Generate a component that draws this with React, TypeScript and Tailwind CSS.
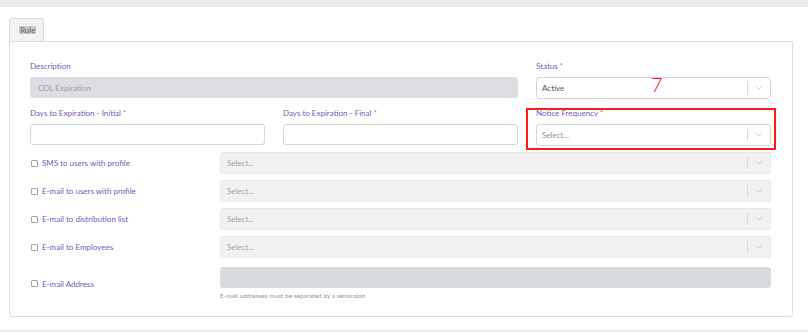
import { FiChevronDown } from "react-icons/fi";

const font = { fontFamily: "Lato, 'Open Sans', sans-serif" };

const notifyRows = [
  "SMS to users with profile",
  "E-mail to users with profile",
  "E-mail to distribution list",
  "E-mail to Employees",
];

function Label({ text, required }: { text: string; required?: boolean }) {
  return (
    <div className="h-[10px] leading-[10px] text-[8px] text-[#7a56bd] mb-[6px] whitespace-nowrap">
      {text}
      {required ? <span className="text-[#ee6677]"> *</span> : null}
    </div>
  );
}

function SelectBox({ value, disabled }: { value: string; disabled?: boolean }) {
  return (
    <div
      className={
        disabled
          ? "h-[22px] flex items-center rounded-[3px] border border-[#e8e8e8] bg-[#f1f1f1]"
          : "h-[22px] flex items-center rounded-[3px] border border-[#d6d6d6] bg-white"
      }
    >
      <span
        className={
          disabled
            ? "flex-1 pl-[6px] text-[8px] text-[#a3a3a3]"
            : "flex-1 pl-[5px] text-[8px] " + (value === "Active" ? "text-[#555]" : "text-[#909090]")
        }
      >
        {value}
      </span>
      <span className="w-px h-[12px] bg-[#d8d8d8]" />
      <span className="w-[22px] flex justify-center text-[#c4c4c4]">
        <FiChevronDown size={10} />
      </span>
    </div>
  );
}

export default function App() {
  return (
    <div className="relative w-[808px] h-[332px] bg-white overflow-hidden" style={font}>
      <div className="h-[7px] bg-[#e9eaed]" />
      <div className="pt-[11px] pl-[9px]">
        <div className="w-[35px] h-[23px] border border-b-0 border-[#d9d9d9] rounded-t-[3px] bg-[#f2f3f5] flex items-center pl-[9px]">
          <span className="text-[8px] leading-[8px] text-[#666] bg-[#c9c9c9] px-[1px]">Rule</span>
        </div>
        <div className="w-[784px] h-[276px] border border-[#dedede] rounded-b-[3px] pt-[19px] pl-[20px] pr-[21px]">
          <div className="grid grid-cols-[235px_235px_235px] gap-x-[18px] gap-y-[9px]">
            <div className="col-span-2">
              <Label text="Description" />
              <div className="h-[21px] rounded-[3px] bg-[#dcdee1] flex items-center pl-[8px] text-[8px] text-[#a0a0a0]">
                CDL Expiration
              </div>
            </div>
            <div>
              <Label text="Status" required />
              <SelectBox value="Active" />
            </div>
            <div>
              <Label text="Days to Expiration - Initial" required />
              <div className="h-[21px] rounded-[3px] border border-[#d6d6d6] bg-white" />
            </div>
            <div>
              <Label text="Days to Expiration - Final" required />
              <div className="h-[21px] rounded-[3px] border border-[#d6d6d6] bg-white" />
            </div>
            <div>
              <Label text="Notice Frequency" required />
              <SelectBox value="Select..." />
            </div>
          </div>

          <div className="mt-[6px] flex flex-col gap-[6px]">
            {notifyRows.map((row, index) => (
              <div key={index} className="flex items-center">
                <div className="w-[190px] flex items-center pl-[1px]">
                  <span className="w-[7px] h-[7px] border border-[#a5a5a5] rounded-[1px] bg-white" />
                  <span className="ml-[4px] text-[8px] text-[#7a56bd]">{row}</span>
                </div>
                <div className="flex-1">
                  <SelectBox value="Select..." disabled />
                </div>
              </div>
            ))}
          </div>

          <div className="mt-[9px] flex">
            <div className="w-[190px] flex items-center pl-[1px] h-[21px] mt-[6px]">
              <span className="w-[7px] h-[7px] border border-[#a5a5a5] rounded-[1px] bg-white" />
              <span className="ml-[4px] text-[8px] text-[#7a56bd]">E-mail Address</span>
            </div>
            <div className="flex-1">
              <div className="h-[21px] rounded-[3px] bg-[#d8dbe0]" />
              <div className="mt-[3px] text-[6.5px] text-[#959595]">
                E-mail addresses must be separated by a semicolon
              </div>
            </div>
          </div>
        </div>
      </div>
      <div className="absolute left-0 right-0 top-[330px] h-[2px] bg-[#e9eaed]" />

      {/* annotation overlay */}
      <div className="absolute left-[526px] top-[108px] w-[250px] h-[42px] border-2 border-[#ff1a1a]" />
      <div
        className="absolute left-[651px] top-[72px] text-[20px] leading-[24px] font-light text-[#ff1010]"
        style={{ fontFamily: "Lato, 'Liberation Sans', sans-serif" }}
      >
        7
      </div>
    </div>
  );
}
